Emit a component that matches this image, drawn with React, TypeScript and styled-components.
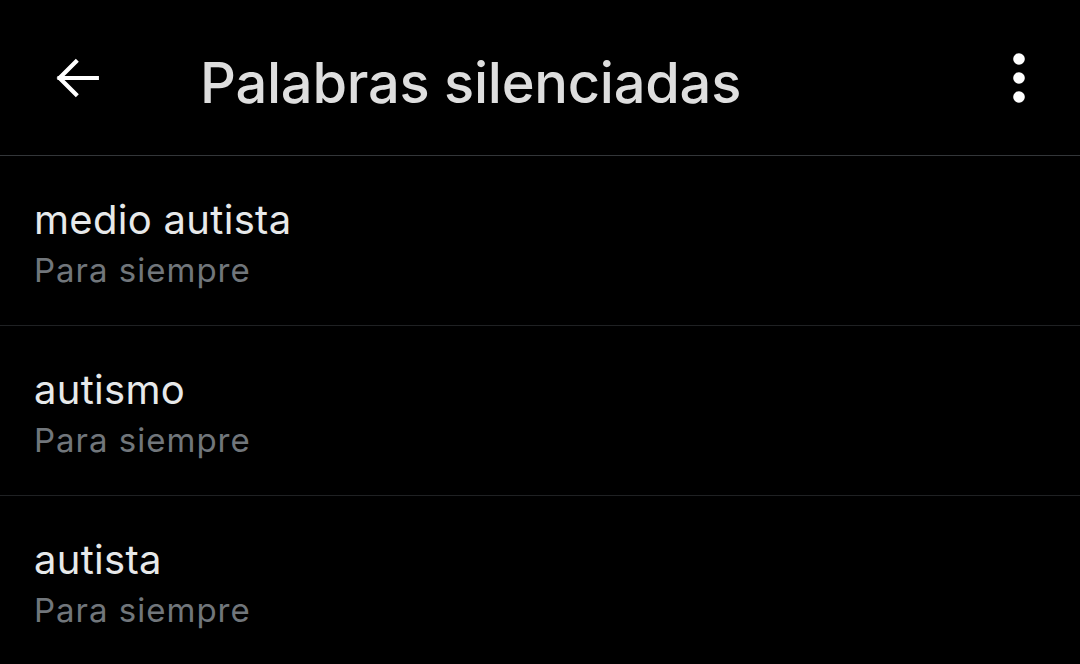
import styled, { createGlobalStyle } from "styled-components";

const Global = createGlobalStyle`
  html, body {
    margin: 0;
    padding: 0;
    background: #000;
  }
  body {
    font-family: Inter, "Noto Sans", "Liberation Sans", sans-serif;
    color: #e7e9ea;
  }
`;

const Screen = styled.div`
  width: 1080px;
  height: 664px;
  overflow: hidden;
  background: #000;
  display: flex;
  flex-direction: column;
`;

const Header = styled.header`
  height: 156px;
  flex-shrink: 0;
  display: flex;
  align-items: center;
  padding: 0 33px 0 49px;
  border-bottom: 1px solid #333639;
  box-sizing: border-box;
`;

const IconButton = styled.button`
  width: 56px;
  height: 56px;
  padding: 0;
  border: none;
  background: none;
  display: flex;
  align-items: center;
  justify-content: center;
  color: #fff;
  cursor: pointer;
`;

const Title = styled.h1`
  flex: 1;
  margin: 10px 0 0 95px;
  font-size: 56px;
  font-weight: 500;
  letter-spacing: -0.25px;
  color: #dedede;
`;

const List = styled.ul`
  list-style: none;
  margin: 0;
  padding: 0;
`;

const Row = styled.li`
  height: 170px;
  box-sizing: border-box;
  padding: 39px 34px 0;
  border-bottom: 1px solid #1f2123;
  display: flex;
  flex-direction: column;
`;

const Word = styled.div`
  font-size: 40px;
  line-height: 50px;
  letter-spacing: 0.3px;
  color: #e7e9ea;
`;

const Duration = styled.div`
  font-size: 33px;
  line-height: 51px;
  letter-spacing: 1px;
  color: #71767b;
`;

const words = ["medio autista", "autismo", "autista"];

export default function App() {
  return (
    <Screen>
      <Global />
      <Header>
        <IconButton aria-label="Atrás">
          <svg width="56" height="56" viewBox="0 0 24 24" fill="none">
            <path
              d="M20.5 12H4.5M11.5 5l-7 7 7 7"
              stroke="currentColor"
              strokeWidth="1.8"
              strokeLinecap="square"
            />
          </svg>
        </IconButton>
        <Title>Palabras silenciadas</Title>
        <IconButton aria-label="Más opciones">
          <svg width="14" height="52" viewBox="0 0 14 52">
            <circle cx="7" cy="7" r="5.8" fill="currentColor" />
            <circle cx="7" cy="26" r="5.8" fill="currentColor" />
            <circle cx="7" cy="45" r="5.8" fill="currentColor" />
          </svg>
        </IconButton>
      </Header>
      <List>
        {words.map((w) => (
          <Row key={w}>
            <Word>{w}</Word>
            <Duration>Para siempre</Duration>
          </Row>
        ))}
      </List>
    </Screen>
  );
}
